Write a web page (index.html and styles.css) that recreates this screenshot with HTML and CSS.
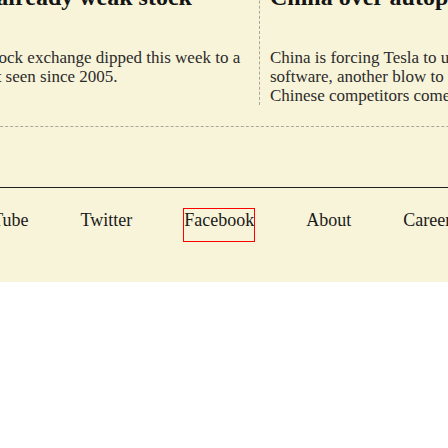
FILE: index.html
```html
<!DOCTYPE html>
<html lang="en">
<head>
<meta charset="utf-8">
<title>Stories</title>
<link rel="stylesheet" href="styles.css">
</head>
<body>
<div class="page">
  <section class="stories">
    <article class="story story-left">
      <h2 class="headline">Tesla’s troubles in China<br>hit an already weak stock</h2>
      <p class="teaser">China’s stock exchange dipped this week to a<br>trough not seen since 2005.</p>
    </article>
    <article class="story story-right">
      <h2 class="headline">Tesla’s new headache: a clash with<br>China over autopilot data</h2>
      <p class="teaser">China is forcing Tesla to update its autopilot<br>software, another blow to the carmaker as<br>Chinese competitors come for its market.</p>
    </article>
  </section>
  <footer class="footer">
    <nav class="nav">
      <a class="nav-link" href="#">YouTube</a>
      <a class="nav-link" href="#">Twitter</a>
      <a class="nav-link nav-link-focused" href="#">Facebook</a>
      <a class="nav-link" href="#">About</a>
      <a class="nav-link" href="#">Careers</a>
      <a class="nav-link" href="#">Contact</a>
    </nav>
  </footer>
</div>
</body>
</html>
```
FILE: styles.css
```css
html, body {
  margin: 0;
  padding: 0;
  overflow: hidden;
  background: #ffffff;
}

.page {
  background: #f8f4d9;
  margin: -45px 0 0 -85px;
  width: 800px;
  font-family: "Liberation Serif", "Times New Roman", serif;
}

.stories {
  display: grid;
  grid-template-columns: 345px 1fr;
  padding-bottom: 21px;
  border-bottom: 1px dashed #a8a699;
}

.story-left {
  padding: 0 10px 0 16px;
  border-right: 1px dashed #a8a699;
}

.story-right {
  padding: 0 0 0 10px;
}

.headline {
  margin: 0 0 37px;
  font-size: 24px;
  line-height: 28px;
  font-weight: 700;
  color: #141414;
  white-space: nowrap;
}

.teaser {
  margin: 0;
  font-size: 17px;
  line-height: 19px;
  color: #2b2b2b;
  white-space: nowrap;
}

.footer {
  margin-top: 60px;
  border-top: 1px solid #1e1e1e;
  padding: 21px 0 41px;
}

.nav {
  display: flex;
  gap: 52px;
  padding-left: 48px;
  white-space: nowrap;
}

.nav-link {
  display: block;
  font-size: 18px;
  line-height: 23px;
  padding-bottom: 9px;
  color: #1a1a1a;
  text-decoration: none;
}

.nav-link-focused {
  outline: 1px solid #ff0000;
}
```
